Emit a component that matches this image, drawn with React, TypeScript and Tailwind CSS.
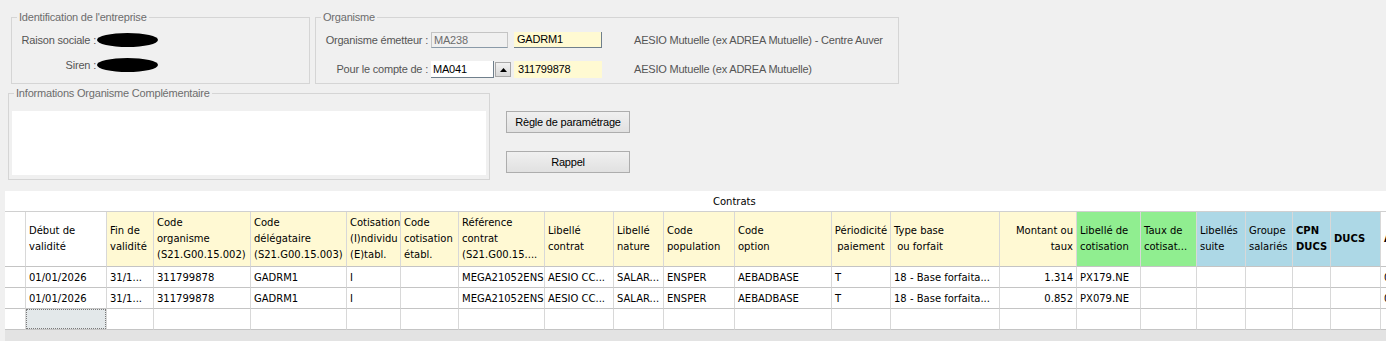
import React from 'react';

type Col = { w: string; head: string[]; bg: string; align?: 'left' | 'right' | 'center'; bold?: boolean };

const cols: Col[] = [
  { w: '21px', head: [], bg: 'bg-white' },
  { w: '81px', head: ['Début de', 'validité'], bg: 'bg-white' },
  { w: '47px', head: ['Fin de', 'validité'], bg: 'bg-[#fff9d3]' },
  { w: '97px', head: ['Code', 'organisme', '(S21.G00.15.002)'], bg: 'bg-[#fff9d3]' },
  { w: '96px', head: ['Code', 'délégataire', '(S21.G00.15.003)'], bg: 'bg-[#fff9d3]' },
  { w: '54px', head: ['Cotisation', '(I)ndividu', '(E)tabl.'], bg: 'bg-[#fff9d3]' },
  { w: '58px', head: ['Code', 'cotisation', 'établ.'], bg: 'bg-[#fff9d3]' },
  { w: '86px', head: ['Référence', 'contrat', '(S21.G00.15....'], bg: 'bg-[#fff9d3]' },
  { w: '69px', head: ['Libellé', 'contrat'], bg: 'bg-[#fff9d3]' },
  { w: '50px', head: ['Libellé', 'nature'], bg: 'bg-[#fff9d3]' },
  { w: '71px', head: ['Code', 'population'], bg: 'bg-[#fff9d3]' },
  { w: '97px', head: ['Code', 'option'], bg: 'bg-[#fff9d3]' },
  { w: '59px', head: ['Périodicité', 'paiement'], bg: 'bg-[#fff9d3]', align: 'center' },
  { w: '109px', head: ['Type base', ' ou forfait'], bg: 'bg-[#fff9d3]' },
  { w: '77px', head: ['Montant ou', 'taux'], bg: 'bg-[#fff9d3]', align: 'right' },
  { w: '64px', head: ['Libellé de', 'cotisation'], bg: 'bg-[#90ee90]' },
  { w: '56px', head: ['Taux de', 'cotisat...'], bg: 'bg-[#90ee90]' },
  { w: '49px', head: ['Libellés', 'suite'], bg: 'bg-[#add8e6]' },
  { w: '47px', head: ['Groupe', 'salariés'], bg: 'bg-[#add8e6]' },
  { w: '38px', head: ['CPN', 'DUCS'], bg: 'bg-[#add8e6]', bold: true },
  { w: '50px', head: ['DUCS'], bg: 'bg-[#add8e6]', bold: true },
  { w: '60px', head: ['Actif'], bg: 'bg-white', bold: true },
];

const rows: string[][] = [
  ['', '01/01/2026', '31/1...', '311799878', 'GADRM1', 'I', '', 'MEGA21052ENS', 'AESIO CC...', 'SALAR...', 'ENSPER', 'AEBADBASE', 'T', '18 - Base forfaita...', '1.314', 'PX179.NE', '', '', '', '', '', '0'],
  ['', '01/01/2026', '31/1...', '311799878', 'GADRM1', 'I', '', 'MEGA21052ENS', 'AESIO CC...', 'SALAR...', 'ENSPER', 'AEBADBASE', 'T', '18 - Base forfaita...', '0.852', 'PX079.NE', '', '', '', '', '', '0'],
];

const gridCols =
  'grid-cols-[21px_81px_47px_97px_96px_54px_58px_86px_69px_50px_71px_97px_59px_109px_77px_64px_56px_49px_47px_38px_50px_60px]';

function GroupBox({ title, className, children }: { title: string; className: string; children?: React.ReactNode }) {
  return (
    <div className={`relative border border-[#d5d5d5] ${className}`}>
      <span className="absolute left-[5px] top-[-8px] bg-[#f0f0f0] px-[2px] leading-[14px] text-[#6d6d6d]">{title}</span>
      {children}
    </div>
  );
}

function Redacted() {
  return <div className="h-[14px] w-[61px] rounded-[50%] bg-black" />;
}

function App() {
  return (
    <div className="h-[341px] w-[1386px] overflow-hidden bg-[#f0f0f0] text-[11px] tracking-[-0.2px] font-['Liberation_Sans',Arial,sans-serif] text-black">
      <div className="flex pt-[17px]">
        <GroupBox title="Identification de l'entreprise" className="ml-[11px] h-[67px] w-[299px]">
          <div className="grid grid-cols-[84px_1fr] gap-y-[9px] pt-[14px] text-[#555]">
            <div className="flex h-[16px] items-center justify-end whitespace-nowrap">Raison sociale :</div>
            <div className="flex h-[16px] items-center pl-[1px]"><Redacted /></div>
            <div className="flex h-[16px] items-center justify-end">Siren :</div>
            <div className="flex h-[16px] items-center pl-[1px]"><Redacted /></div>
          </div>
        </GroupBox>
        <GroupBox title="Organisme" className="ml-[5px] h-[67px] w-[584px]">
          <div className="flex flex-col gap-[13px] pt-[14px]">
            <div className="flex h-[16px] items-center">
              <div className="w-[115px] pr-[3px] text-right whitespace-nowrap text-[#555]">Organisme émetteur :</div>
              <div className="flex h-[16px] w-[77px] items-center border border-[#c4c4c4] border-b-[#8a9aa8] bg-[#f0f0f0] pl-[2px] text-[#6d6d6d]">MA238</div>
              <div className="ml-[6px] flex h-[16px] w-[88px] items-center border-r border-b border-[#6f7f8c] bg-[#fffad2] pl-[3px]">GADRM1</div>
              <div className="ml-[32px] whitespace-nowrap text-[#555]">AESIO Mutuelle (ex ADREA Mutuelle) - Centre Auver</div>
            </div>
            <div className="flex h-[17px] items-center">
              <div className="w-[115px] pr-[3px] text-right whitespace-nowrap text-[#555]">Pour le compte de :</div>
              <div className="flex h-[17px] w-[63px] items-center border-b border-r border-[#6f7f8c] bg-white pl-[2px]">MA041</div>
              <div className="ml-[1px] flex h-[15px] w-[16px] items-center justify-center border border-[#a8a8a8] bg-gradient-to-b from-[#f2f2f2] to-[#d8d8d8]">
                <svg width="7" height="4" viewBox="0 0 7 4"><polygon points="0,4 7,4 3.5,0" fill="#000" /></svg>
              </div>
              <div className="ml-[3px] flex h-[17px] w-[88px] items-center bg-[#fffad2] pl-[4px]">311799878</div>
              <div className="ml-[32px] whitespace-nowrap text-[#555]">AESIO Mutuelle (ex ADREA Mutuelle)</div>
            </div>
          </div>
        </GroupBox>
      </div>

      <div className="mt-[9px] flex">
        <GroupBox title="Informations Organisme Complémentaire" className="ml-[8px] h-[87px] w-[482px]">
          <div className="px-[3px] pt-[17px]">
            <div className="h-[64px] bg-white" />
          </div>
        </GroupBox>
        <div className="ml-[16px] flex flex-col gap-[18px] pt-[18px]">
          <button className="h-[22px] w-[124px] border border-[#adadad] bg-gradient-to-b from-[#f0f0f0] to-[#e1e1e1] text-[11px]">Règle de paramétrage</button>
          <button className="h-[22px] w-[124px] border border-[#adadad] bg-gradient-to-b from-[#f0f0f0] to-[#e1e1e1] text-[11px]">Rappel</button>
        </div>
      </div>

      <div className="ml-[5px] mt-[11px] overflow-hidden bg-white font-['DejaVu_Sans',Verdana,sans-serif] text-[10px] tracking-normal">
        <div className="flex h-[20px] items-center whitespace-nowrap pl-[708px]">Contrats</div>
        <div className={`grid w-max border-t border-[#d0d0d0] ${gridCols}`}>
          {cols.map((c, i) => (
            <div
              key={`h${i}`}
              className={`flex h-[55px] flex-col justify-center overflow-hidden border-r border-b border-r-[#d8d8d8] border-b-[#c4c4c4] leading-[16px] ${c.bg} ${c.bold ? 'font-bold' : ''} ${c.align === 'right' ? 'items-end pr-[3px]' : c.align === 'center' ? 'items-center' : 'items-start pl-[3px]'}`}
            >
              {c.head.map((l, j) => (
                <div key={j} className="whitespace-pre">{l}</div>
              ))}
            </div>
          ))}
          {rows.map((r, ri) =>
            r.map((v, ci) => (
              <div
                key={`r${ri}c${ci}`}
                className={`flex h-[21px] items-center overflow-hidden whitespace-nowrap border-r border-b border-r-[#d8d8d8] border-b-[#c4c4c4] bg-white ${ci === 14 ? 'justify-end pr-[3px]' : 'pl-[3px]'}`}
              >
                {v}
              </div>
            ))
          )}
          {cols.map((c, ci) => (
            <div key={`e${ci}`} className="h-[21px] border-r border-b border-r-[#d8d8d8] border-b-[#c4c4c4] bg-white">
              {ci === 1 && <div className="h-full w-full border border-dotted border-[#7a7a7a] bg-[#e3e8ea]" />}
            </div>
          ))}
        </div>
        <div className="h-[11px] bg-[#e3e3e3]" />
      </div>
    </div>
  );
}

export default App;
